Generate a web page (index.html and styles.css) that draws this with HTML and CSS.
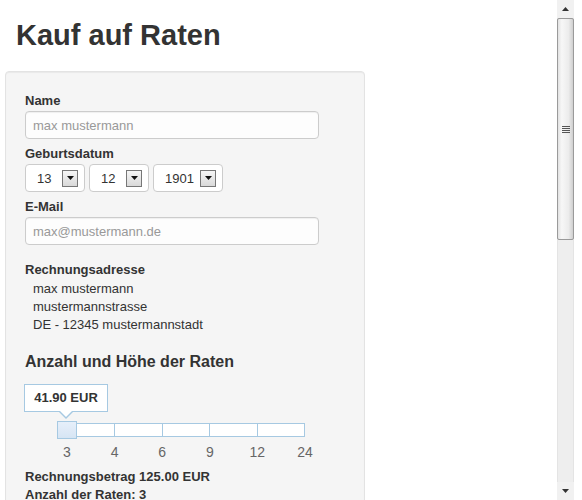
FILE: index.html
```
<!DOCTYPE html>
<html lang="de">
<head>
<meta charset="utf-8">
<title>Kauf auf Raten</title>
<link rel="stylesheet" href="styles.css">
</head>
<body>
<div class="window">
  <main class="page">
    <h1 class="title">Kauf auf Raten</h1>
    <section class="well">
      <label class="lbl">Name</label>
      <input class="field name" type="text" placeholder="max mustermann">

      <label class="lbl">Geburtsdatum</label>
      <div class="dob">
        <div class="select"><span class="val">13</span><span class="arrow"><svg width="7" height="4" viewBox="0 0 7 4"><path d="M0 0H7L3.5 4Z" fill="#111"/></svg></span></div>
        <div class="select"><span class="val">12</span><span class="arrow"><svg width="7" height="4" viewBox="0 0 7 4"><path d="M0 0H7L3.5 4Z" fill="#111"/></svg></span></div>
        <div class="select year"><span class="val">1901</span><span class="arrow"><svg width="7" height="4" viewBox="0 0 7 4"><path d="M0 0H7L3.5 4Z" fill="#111"/></svg></span></div>
      </div>

      <label class="lbl">E-Mail</label>
      <input class="field email" type="text" placeholder="max@mustermann.de">

      <div class="lbl">Rechnungsadresse</div>
      <div class="address">
        <div>max mustermann</div>
        <div>mustermannstrasse</div>
        <div>DE - 12345 mustermannstadt</div>
      </div>

      <h2 class="section-title">Anzahl und Höhe der Raten</h2>
      <div class="tooltip">41.90 EUR</div>
      <div class="slider">
        <div class="track"><span></span><span></span><span></span><span></span><span></span></div>
        <span class="handle"></span>
        <div class="ticks"><span>3</span><span>4</span><span>6</span><span>9</span><span>12</span><span>24</span></div>
      </div>

      <div class="summary">
        <div>Rechnungsbetrag 125.00 EUR</div>
        <div>Anzahl der Raten: 3</div>
      </div>
    </section>
  </main>
  <div class="scrollbar">
    <div class="sb-btn"><svg width="7" height="4" viewBox="0 0 7 4"><path d="M0 4H7L3.5 0Z" fill="#333"/></svg></div>
    <div class="sb-thumb"><span class="grip"></span></div>
    <div class="sb-track"></div>
    <div class="sb-btn"><svg width="7" height="4" viewBox="0 0 7 4"><path d="M0 0H7L3.5 4Z" fill="#333"/></svg></div>
  </div>
</div>
</body>
</html>
```
FILE: styles.css
```
html, body {
  margin: 0;
  height: 500px;
  overflow: hidden;
  background: #fff;
}
body {
  font-family: "Liberation Sans", Arial, sans-serif;
  font-size: 13px;
  color: #333;
}
.window {
  display: flex;
  height: 500px;
}
.page {
  flex: 0 0 557px;
  overflow: hidden;
}
.title {
  margin: 17px 0 18px 16px;
  font-size: 29px;
  line-height: 36px;
  font-weight: bold;
  color: #333;
}
.well {
  margin-left: 5px;
  width: 360px;
  box-sizing: border-box;
  padding: 20px 19px 19px;
  background: #f5f5f5;
  border: 1px solid #e3e3e3;
  border-radius: 4px;
  box-shadow: inset 0 1px 1px rgba(0,0,0,.05);
}
.lbl {
  display: block;
  font-weight: bold;
  line-height: 18px;
  margin-bottom: 1px;
}
.field {
  display: block;
  width: 294px;
  height: 28px;
  box-sizing: border-box;
  border: 1px solid #ccc;
  border-radius: 4px;
  padding: 0 7px;
  margin: 0 0 6px;
  font: 13px "Liberation Sans", Arial, sans-serif;
  color: #555;
  background: #fdfdfd;
  box-shadow: inset 0 1px 1px rgba(0,0,0,.06);
}
.field::placeholder {
  color: #999;
}
.field.email {
  margin-bottom: 16px;
}
.dob {
  display: flex;
  gap: 4px;
  margin-bottom: 6px;
}
.select {
  display: flex;
  align-items: center;
  width: 60px;
  height: 28px;
  box-sizing: border-box;
  border: 1px solid #ccc;
  border-radius: 4px;
  background: #fff;
  padding: 0 6px 0 11px;
}
.select.year {
  width: 70px;
}
.select .arrow {
  margin-left: auto;
  width: 16px;
  height: 17px;
  box-sizing: border-box;
  border: 1px solid #777;
  background: linear-gradient(#f6f6f6, #d9d9d9);
  display: flex;
  align-items: center;
  justify-content: center;
}
.address {
  margin-top: 1px;
  padding-left: 8px;
  line-height: 18px;
}
.section-title {
  margin: 18px 0 12px;
  font-size: 16px;
  line-height: 20px;
  font-weight: bold;
}
.tooltip {
  position: relative;
  width: 84px;
  height: 28px;
  box-sizing: border-box;
  margin: 0 0 11px -1px;
  border: 1px solid #a6c9e2;
  background: #fff;
  text-align: center;
  font-weight: bold;
  line-height: 26px;
}
.tooltip::before,
.tooltip::after {
  content: "";
  position: absolute;
  left: 50%;
  width: 0;
  height: 0;
  border-style: solid;
}
.tooltip::before {
  bottom: -8px;
  margin-left: -7px;
  border-width: 7px 7px 0 7px;
  border-color: #a6c9e2 transparent transparent transparent;
}
.tooltip::after {
  bottom: -6px;
  margin-left: -6px;
  border-width: 6px 6px 0 6px;
  border-color: #fff transparent transparent transparent;
}
.slider {
  position: relative;
  margin-left: 42px;
  width: 238px;
}
.track {
  display: flex;
  height: 14px;
  box-sizing: border-box;
  border: 1px solid #a6c9e2;
  background: #fff;
}
.track span {
  flex: 1;
  border-left: 1px solid #a6c9e2;
}
.track span:first-child {
  border-left: 0;
}
.handle {
  position: absolute;
  left: -10px;
  top: -2px;
  width: 20px;
  height: 18px;
  box-sizing: border-box;
  border: 1px solid #a6c9e2;
  background: linear-gradient(#e6effa 0%, #dfeaf7 50%, #d6e5f4 100%);
}
.ticks {
  display: grid;
  grid-template-columns: repeat(6, 47.6px);
  width: 285.6px;
  margin: 6px 0 0 -23.8px;
  font-size: 14px;
  line-height: 18px;
  color: #666;
  text-align: center;
}
.summary {
  margin-top: 7px;
  font-weight: bold;
  line-height: 18px;
}
.scrollbar {
  flex: 0 0 17px;
  margin-right: 8px;
  display: flex;
  flex-direction: column;
  background: #eeeeee;
  box-shadow: inset 1px 0 0 #e4e4e4, inset -1px 0 0 #e4e4e4;
}
.sb-btn {
  height: 18px;
  display: flex;
  align-items: center;
  justify-content: center;
  background: #f1f1f1;
}
.sb-thumb {
  height: 222px;
  box-sizing: border-box;
  border: 1px solid #9a9a9a;
  border-radius: 2px;
  background: linear-gradient(to right, #e2e2e2 0%, #f7f7f7 25%, #ececec 70%, #cfcfcf 100%);
  display: flex;
  align-items: center;
  justify-content: center;
}
.grip {
  width: 8px;
  height: 7px;
  background: repeating-linear-gradient(#555 0 1px, transparent 1px 2px);
}
.sb-track {
  flex: 1;
}
```
